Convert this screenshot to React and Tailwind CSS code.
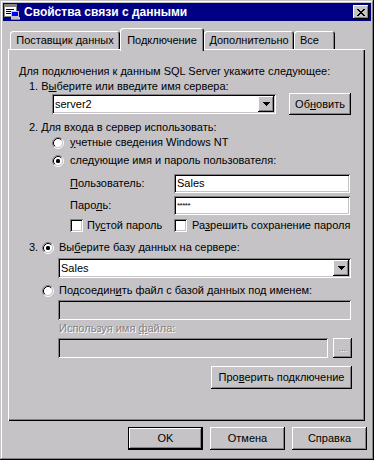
import React from 'react';

const RAISED = 'shadow-[inset_-1px_-1px_#000,inset_1px_1px_#fff,inset_-2px_-2px_#848284,inset_2px_2px_#c6c3c6]';
const SUNKEN = 'shadow-[inset_1px_1px_#848284,inset_-1px_-1px_#fff,inset_2px_2px_#000,inset_-2px_-2px_#c6c3c6]';
const DIS = 'text-[#848284] [text-shadow:1px_1px_0_#fff]';

function Radio({ checked }) {
  return (
    <svg width="12" height="12" viewBox="0 0 12 12" className="shrink-0 block">
      <circle cx="6" cy="6" r="4.5" fill="#fff" />
      <path d="M2.11 9.89A5.5 5.5 0 0 1 9.89 2.11" stroke="#848284" fill="none" />
      <path d="M9.89 2.11A5.5 5.5 0 0 1 2.11 9.89" stroke="#fff" fill="none" />
      <path d="M2.82 9.18A4.5 4.5 0 0 1 9.18 2.82" stroke="#000" fill="none" />
      <path d="M9.18 2.82A4.5 4.5 0 0 1 2.82 9.18" stroke="#c6c3c6" fill="none" />
      {checked && <rect x="4" y="4" width="4" height="4" rx="1.5" fill="#000" />}
    </svg>
  );
}

function Check() {
  return <div className={`w-[13px] h-[13px] shrink-0 bg-white ${SUNKEN}`} />;
}

function Arrow() {
  return (
    <svg width="7" height="4" viewBox="0 0 7 4" className="block">
      <path d="M0 0h7v1h-1v1h-1v1h-1v1h-1v-1h-1v-1h-1v-1h-1z" fill="#000" />
    </svg>
  );
}

function Combo({ value, className }) {
  return (
    <div className={`flex items-stretch bg-white ${SUNKEN} p-[2px] ${className}`}>
      <span className="flex-1 flex items-center pl-[1px] leading-none">{value}</span>
      <div className={`w-[16px] bg-[#c6c3c6] ${RAISED} flex items-center justify-center`}>
        <Arrow />
      </div>
    </div>
  );
}

function Btn({ children, className, def }) {
  if (def) {
    return (
      <div className={`border border-black flex ${className}`}>
        <div className={`flex-1 flex items-center justify-center bg-[#c6c3c6] ${RAISED}`}>{children}</div>
      </div>
    );
  }
  return (
    <div className={`flex items-center justify-center bg-[#c6c3c6] ${RAISED} ${className}`}>{children}</div>
  );
}

function TitleIcon() {
  return (
    <svg width="16" height="16" viewBox="0 0 16 16" className="block">
      <rect x="0.5" y="0.5" width="12" height="12" fill="#fff" stroke="#848284" />
      <rect x="1" y="1" width="11" height="2" fill="#848284" />
      <rect x="2" y="5" width="8" height="1" fill="#000" />
      <rect x="2" y="7" width="6" height="1" fill="#000" />
      <rect x="2" y="9" width="5" height="1" fill="#000" />
      <rect x="7.5" y="7.5" width="7" height="5" fill="#0000ff" stroke="#c6c3c6" />
      <rect x="7" y="13" width="9" height="2" fill="#c6c3c6" />
      <rect x="7" y="15" width="9" height="1" fill="#848284" />
    </svg>
  );
}

export default function App() {
  return (
    <div className="w-[374px] h-[460px] bg-[#c6c3c6] p-[3px] flex flex-col font-['Liberation_Sans',Arial,sans-serif] text-[11px] leading-[13px] text-black shadow-[inset_-1px_-1px_#000,inset_1px_1px_#c6c3c6,inset_-2px_-2px_#848284,inset_2px_2px_#fff] select-none">
      {/* title bar */}
      <div className="h-[18px] bg-[#000084] flex items-center pl-[1px] pr-[2px]">
        <TitleIcon />
        <div className="ml-[4px] text-white font-bold text-[12px] flex-1">Свойства связи с данными</div>
        <div className={`w-[16px] h-[14px] bg-[#c6c3c6] ${RAISED} flex items-center justify-center`}>
          <svg width="8" height="7" viewBox="0 0 8 7" className="block">
            <path d="M0 0h2v1h1v1h2v-1h1v-1h2v1h-1v1h-1v1h-1v1h1v1h1v1h1v1h-2v-1h-1v-1h-2v1h-1v1h-2v-1h1v-1h1v-1h1v-1h-1v-1h-1v-1h-1z" fill="#000" />
          </svg>
        </div>
      </div>

      {/* tabs */}
      <div className="mt-[7px] h-[21px] flex items-end pl-[7px]">
        <div className="w-[110px] h-[18px] rounded-t-[3px] shadow-[inset_1px_1px_#fff,inset_-1px_0_#000,inset_-2px_0_#848284] flex items-center justify-center pt-[1px]">Поставщик данных</div>
        <div className="relative z-10 w-[84px] h-[23px] -mb-[2px] bg-[#c6c3c6] rounded-t-[3px] shadow-[inset_1px_1px_#fff,inset_-1px_0_#000,inset_-2px_0_#848284] flex items-start justify-center pt-[6px]">Подключение</div>
        <div className="w-[90px] h-[18px] rounded-t-[3px] shadow-[inset_1px_1px_#fff,inset_-1px_0_#000,inset_-2px_0_#848284] flex items-center justify-center pt-[1px]">Дополнительно</div>
        <div className="w-[41px] h-[18px] rounded-t-[3px] shadow-[inset_1px_1px_#fff,inset_-1px_0_#000,inset_-2px_0_#848284] flex items-center pl-[6px] pt-[1px]">Все</div>
      </div>

      {/* panel */}
      <div className="ml-[5px] w-[357px] h-[372px] flex flex-col shadow-[inset_1px_1px_#fff,inset_-1px_-1px_#000,inset_-2px_-2px_#848284]">
        <div className="mt-[16px] ml-[11px]">Для подключения к данным SQL Server укажите следующее:</div>
        <div className="mt-[2px] ml-[21px]">1. В<u>ы</u>берите или введите имя сервера:</div>
        <div className="ml-[44px] h-[22px] flex items-center">
          <Combo value="server2" className="w-[224px] h-[20px]" />
          <Btn className="ml-[13px] w-[62px] h-[22px]">Об<u>н</u>овить</Btn>
        </div>
        <div className="mt-[6px] ml-[21px]">2. Для входа в сервер использовать:</div>
        <div className="mt-[2px] ml-[44px] flex items-center gap-[6px]">
          <Radio /><span><u>у</u>четные сведения Windows NT</span>
        </div>
        <div className="mt-[5px] ml-[44px] flex items-center gap-[6px]">
          <Radio checked /><span>сле<u>д</u>ующие имя и пароль пользователя:</span>
        </div>
        <div className="mt-[7px] ml-[62px] h-[19px] flex items-center">
          <span className="w-[104px]"><u>П</u>ользователь:</span>
          <div className={`w-[176px] h-[19px] bg-white ${SUNKEN} flex items-center pl-[3px]`}>Sales</div>
        </div>
        <div className="mt-[3px] ml-[62px] h-[19px] flex items-center">
          <span className="w-[104px]">Паро<u>л</u>ь:</span>
          <div className={`w-[176px] h-[19px] bg-white ${SUNKEN} flex items-center pl-[3px] text-[8px] tracking-[-0.5px]`}>*****</div>
        </div>
        <div className="mt-[4px] ml-[62px] h-[13px] flex items-center">
          <Check />
          <span className="ml-[4px] w-[87px]">Пу<u>с</u>той пароль</span>
          <Check />
          <span className="ml-[5px]">Ра<u>з</u>решить сохранение пароля</span>
        </div>
        <div className="mt-[9px] ml-[21px] flex items-center">
          <span className="w-[13px]">3.</span>
          <Radio checked />
          <span className="ml-[5px]">Вы<u>б</u>ерите базу данных на сервере:</span>
        </div>
        <div className="mt-[4px] ml-[50px]">
          <Combo value="Sales" className="w-[293px] h-[20px]" />
        </div>
        <div className="mt-[6px] ml-[34px] flex items-center">
          <Radio />
          <span className="ml-[5px]">Подсоедин<u>и</u>ть файл с базой данных под именем:</span>
        </div>
        <div className={`mt-[3px] ml-[50px] w-[293px] h-[20px] ${SUNKEN}`} />
        <div className={`mt-[2px] ml-[51px] ${DIS}`}>Используя имя <u>ф</u>айла:</div>
        <div className="mt-[3px] ml-[50px] h-[20px] flex items-center">
          <div className={`w-[270px] h-[20px] ${SUNKEN}`} />
          <Btn className={`ml-[5px] w-[19px] h-[20px] ${DIS} text-[9px]`}>...</Btn>
        </div>
        <div className="mt-[8px] ml-[203px]">
          <Btn className="w-[141px] h-[23px]">Про<u>в</u>ерить подключение</Btn>
        </div>
      </div>

      {/* bottom buttons */}
      <div className="mt-[6px] h-[23px] flex pl-[125px] gap-[7px]">
        <Btn def className="w-[75px] h-[23px]">OK</Btn>
        <Btn className="w-[75px] h-[23px]">Отмена</Btn>
        <Btn className="w-[75px] h-[23px]">Справка</Btn>
      </div>
    </div>
  );
}
